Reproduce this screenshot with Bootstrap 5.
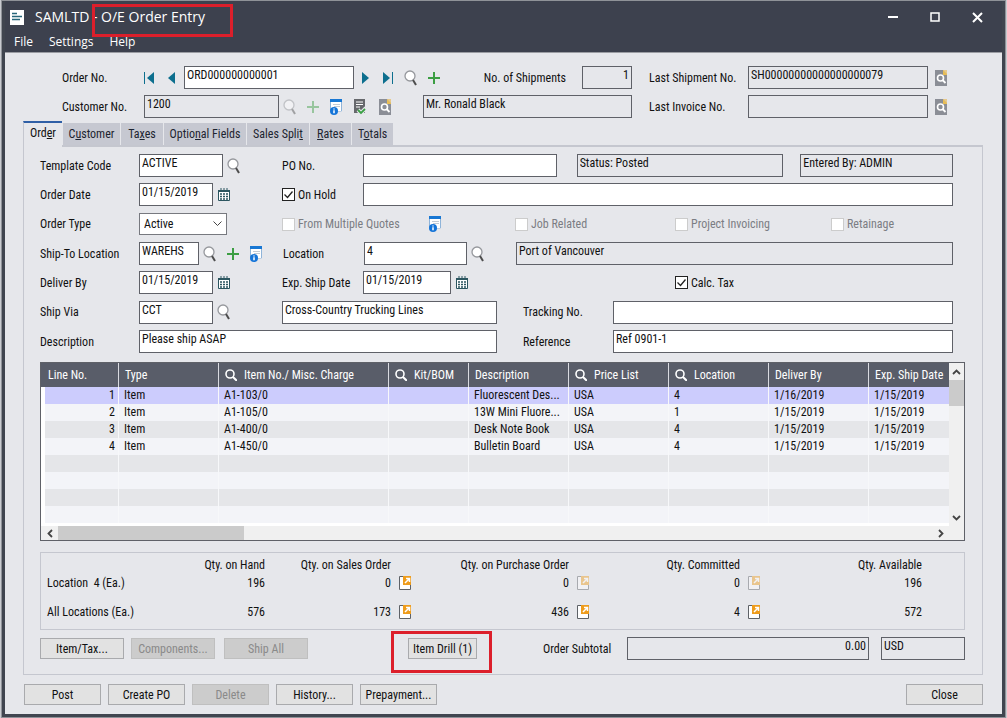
<!DOCTYPE html>
<html lang="en">
<head>
<meta charset="utf-8">
<meta name="viewport" content="width=device-width, initial-scale=1">
<title>SAMLTD - O/E Order Entry</title>
<link href="https://cdn.jsdelivr.net/npm/bootstrap@5.3.0/dist/css/bootstrap.min.css" rel="stylesheet">
<style>
:root{--face:#e6e7eb;--edge:#5f6168;--rule:#c5c7cf;--dark:#3d414e}
body{font-family:"Roboto Condensed","Roboto",sans-serif;font-size:12px;line-height:16px;color:#111;background:#c9cbd0}
button,input,select{font:inherit;color:inherit;border-radius:0}
.win{min-height:100vh;margin:0 1px;background:var(--face);border:solid #40454f;border-width:1px 4px 4px;outline:1px solid #8f9298;outline-offset:-1px}
.caption-bar{background:var(--dark);color:#fff;font-family:"Open Sans","Noto Sans",sans-serif;height:52px;border-bottom:1px solid #9b9da3}
.title-line{height:32px;padding-left:5px}
.title-text{font-size:14px;margin-left:11px}
.hot{position:relative}
.hot::after{content:"";position:absolute;border:3px solid #dc1f2b;pointer-events:none}
.hot-title::after{inset:-3px -28px -11px -9px}
.hot-drill::after{inset:-7px -15px -14px -17px}
.menu a{color:#fff;text-decoration:none;font-size:12px;line-height:18px}
.menu{padding-left:9px}
.sysbtn{width:42px;height:28px;background:none;border:0;padding:0;color:#fff}
.icon-btn{background:none;border:0;padding:0;width:22px;height:22px;display:flex;align-items:center;justify-content:center}
.icon-btn:disabled{opacity:.45}
svg{display:block}
.fld{border:1px solid var(--edge);background:#fff;height:23px;width:100%;min-width:0;padding:0 2px 5px}
.fld[readonly]{background:var(--face)}
.line{display:grid;align-items:center;min-height:23px}
.line>*{min-width:0;white-space:nowrap}
.top-form{padding:13px 48px 3px 57px}
.stack{display:grid;row-gap:6px}
.l-order{grid-template-columns:76px 22px 24px 170px 22px 23px 24px 22px 137px 50px 116px 1fr 26px}
.l-cust{grid-template-columns:82px 135px 23px 22px 24px 22px 53px 209px 116px 1fr 26px}
.line .icon-btn{justify-self:start}
.line .slot{justify-self:center}
.gap-l{padding-left:17px}
.tabs{margin-left:18px;position:relative;margin-bottom:-2px}
.tabs .nav-link{height:22px;padding:2px 0 0;text-align:center;background:#c6c8d1;color:#1d2430;border:0;border-left:1px solid #e6e7eb;border-radius:0;line-height:18px;white-space:nowrap}
.tabs .nav-link.active{height:26px;width:39px;background:var(--face);border-top:2px solid #2f5fa6;border-left:1px solid var(--rule);color:#111;padding-top:1px}
.t58{width:58px}.t43{width:43px}.t83{width:83px}.t63{width:63px}.t42{width:42px}
.tab-low{margin-bottom:2px}
.panel{margin:0 19px 0 18px;border:1px solid var(--rule);border-top-width:2px;padding:7px 17px 14px 16px}
.details{padding-right:12px}
.tall{min-height:24px}
.l-tmpl{grid-template-columns:99px 84px 59px 81px 194fr 20px 207fr 17px 153fr}
.l-date{grid-template-columns:99px 74px 69px 81px 1fr}
.l-type{grid-template-columns:99px 88px 55px 142px 91px 160px 156px 1fr}
.l-loc{grid-template-columns:99px 60px 22px 24px 38px 81px 103px 49px 1fr}
.l-deliv{grid-template-columns:99px 74px 69px 81px 88px 224px 1fr}
.l-via{grid-template-columns:99px 74px 69px 215px 116px 1fr}
.l-desc{grid-template-columns:99px 358px 116px 1fr}
.c7{grid-column:7}.c9{grid-column:9}
.pad26{padding-left:26px}
.drop{border:1px solid #77797f;background:#fff url("data:image/svg+xml,%3Csvg xmlns='http://www.w3.org/2000/svg' width='9' height='6'%3E%3Cpath d='M.5.5l4 4 4-4' fill='none' stroke='%23444'/%3E%3C/svg%3E") no-repeat right 4px center;height:22px;width:100%;appearance:none;padding:0 4px}
.tick{display:flex;align-items:center;gap:3px}
.tick input{appearance:none;width:13px;height:13px;border:1px solid #222;background:#fff;flex:none;margin:0}
.tick input:checked{background:#fff url("data:image/svg+xml,%3Csvg xmlns='http://www.w3.org/2000/svg' width='11' height='11'%3E%3Cpath d='M1.500 5.500l3 3 5-6' fill='none' stroke='%23222' stroke-width='1.300'/%3E%3C/svg%3E") center no-repeat}
.tick input:disabled{border-color:#ccc}
.tick input:disabled+label{color:#7b7d83}
.grid-box{margin-top:9px;border:1px solid var(--edge);background:#f0f0f0;display:grid;grid-template-columns:1fr 15px}
.grid-view{overflow:hidden;background:#fff;height:163px}
.lines{width:100%;table-layout:fixed;border-collapse:separate;border-spacing:0;white-space:nowrap}
.lines th{height:24px;background:#595d69;color:#fff;font-weight:400;padding:0 0 0 6px;border-left:1px solid #d9dae0;overflow:hidden}
.lines th:first-child{border-left:0;padding-left:7px}
.lines td{height:17px;line-height:16px;padding:0 8px 1px 5px;border-left:1px solid #f7f8fa;background:#f3f4f8;overflow:hidden;text-overflow:ellipsis}
.lines td:first-child{border-left:4px solid #fff;text-align:right;padding-right:3px}
.lines tbody tr:nth-child(odd) td{background:#e5e6e9}
.lines tbody tr.picked td{background:#ccccfd}
.lines th svg{display:inline-block;vertical-align:-2px;margin-right:7px}
.w77{width:77px}.w100{width:100px}.w170{width:170px}.w80{width:80px}
.vbar{display:flex;flex-direction:column;justify-content:space-between;position:relative}
.vbar::before,.hbar::before{content:"";background:#cbcbcb;order:1}
.vbar::before{height:26px;margin-bottom:auto}
.hbar{height:14px;display:flex;justify-content:space-between;align-items:center;grid-column:1}
.hbar::before{width:186px;height:14px;margin-right:auto}
.vbar>:last-child,.hbar>:last-child{order:2}
.arrow{border:0;background:none;padding:0;width:17px;height:14px;display:flex;align-items:center;justify-content:center}
.vbar .arrow{width:15px;height:17px}
.qty-box{margin-top:11px;border:1px solid var(--rule);padding:3px 0 3px 6px}
.qty{width:100%;table-layout:fixed;white-space:nowrap}
.qty th{font-weight:400}
.qty th,.qty td{padding:0;text-align:right;height:18px;vertical-align:middle}
.qty tbody tr+tr>*{height:34px;padding-top:6px}
.qty .icon-btn{width:28px;height:16px}
.q218{width:218px}.q126{width:126px}.q28{width:28px}.q150{width:150px}.q143{width:143px}.q42{width:42px}
.push{border:1px solid #a9aaad;background:#e2e2e2;height:21px;padding:0;white-space:nowrap;line-height:18px}
.push:disabled{background:#cccccc;border-color:#bfbfbf;color:#8a8a8a}
.b84{width:84px}.b77{width:77px}.b69{width:69px}
.actions{display:grid;grid-template-columns:91px 93px 184px 135px 84px 1fr 96px;align-items:center;margin-top:7px}
.footer-bar{padding:9px 19px 8px 19px}
.gap-7{gap:7px}
</style>
</head>
<body>
<svg width="0" height="0" class="position-absolute" aria-hidden="true">
  <symbol id="i-find" viewBox="0 0 14 16"><circle cx="6" cy="6" r="5" fill="#fff" stroke="#96989d" stroke-width="1.300"/><path d="M9 10l3 5" stroke="#4d4d4d" stroke-width="2"/></symbol>
  <symbol id="i-plus" viewBox="0 0 12 12"><path d="M6 0v12M0 6h12" stroke="#3c9e43" stroke-width="2"/></symbol>
  <symbol id="i-info" viewBox="0 0 14 16"><path d="M1.500 2v9M12.500 2v10H8" fill="none" stroke="#8fb4d9"/><path d="M2 3h10v9H2z" fill="#fff"/><path d="M1 0h12v3H1z" fill="#1877d3"/><path d="M4 5.500h7M5 7.500h6" stroke="#c4cbd4"/><circle cx="5" cy="12" r="4" fill="#1474d8"/><path d="M5 9.500v1M5 11.300v3" stroke="#fff" stroke-width="1.500"/></symbol>
  <symbol id="i-list" viewBox="0 0 13 16"><path d="M1 0h11v14H1z" fill="#66686c"/><path d="M3 3h7M3 5.500h7M3 8h4" stroke="#fff"/><path d="M5 11l3 3 5-5" fill="none" stroke="#e6e7eb" stroke-width="4"/><path d="M5 11l3 3 4-4" fill="none" stroke="#3ba045" stroke-width="1.800"/></symbol>
  <symbol id="i-doc" viewBox="0 0 12 16"><path d="M0 0h8l4 4v12H0z" fill="#8b8e96"/><path d="M8 0h4v4z" fill="#e9c98a"/><path d="M8 0l4 4v1H8z" fill="#e8bd55"/><circle cx="5.500" cy="8" r="3" fill="none" stroke="#fff" stroke-width="1.600"/><path d="M7.500 10l3 3" stroke="#fff" stroke-width="1.800"/></symbol>
  <symbol id="i-cal" viewBox="0 0 12 13"><path d="M.500 2.500h11v10H.500z" fill="#fff" stroke="#2c5660"/><path d="M0 2h12v2H0z" fill="#2c5660"/><path d="M3 0v3M6 0v3M9 0v3" stroke="#2c5660"/><path d="M2 6h2M5 6h2M8 6h2M2 8.500h2M5 8.500h2M8 8.500h2M2 11h2M5 11h2M8 11h2" stroke="#2c5660" stroke-width="1.300"/></symbol>
  <symbol id="i-drill" viewBox="0 0 12 14"><path d="M.500.500h11v13H.500z" fill="#fff" stroke="#5e6267"/><path d="M4 0h8v9H4z" fill="#ee9c1c"/><path d="M6 7l4-4M7 2.500h3.500V6" fill="none" stroke="#fff" stroke-width="1.500"/></symbol>
  <symbol id="i-lens" viewBox="0 0 12 12"><circle cx="5" cy="5" r="4" fill="none" stroke="currentColor" stroke-width="1.600"/><path d="M8 8l4 4" stroke="currentColor" stroke-width="2"/></symbol>
</svg>
<div class="win">
  <header class="caption-bar">
    <div class="title-line d-flex align-items-center">
      <svg width="14" height="15" viewBox="0 0 14 15"><path d="M0 0h14v15H0z" fill="#fff"/><path d="M2 3.500h5M2 6.500h10M2 9.500h8" stroke="#27667a" stroke-width="1.400"/></svg>
      <div class="title-text me-auto">SAMLTD - <span class="hot hot-title">O/E Order Entry</span></div>
      <button class="sysbtn" aria-label="Minimize"><svg class="mx-auto" width="10" height="10"><path d="M0 5h10" stroke="#fff" stroke-width="2"/></svg></button>
      <button class="sysbtn" aria-label="Maximize"><svg class="mx-auto" width="10" height="10"><path d="M1 1h8v8H1z" fill="none" stroke="#fff" stroke-width="1.500"/></svg></button>
      <button class="sysbtn me-1" aria-label="Close window"><svg class="mx-auto" width="11" height="11"><path d="M1 1l9 9M10 1l-9 9" stroke="#fff" stroke-width="2"/></svg></button>
    </div>
    <nav class="menu d-flex gap-3"><a href="#">File</a><a href="#">Settings</a><a href="#">Help</a></nav>
  </header>

  <main>
    <form class="top-form stack">
      <div class="line l-order">
        <label for="ord">Order No.</label>
        <button type="button" class="icon-btn" aria-label="First"><svg width="11" height="12"><path d="M.500 0v12" stroke="#0d6f8e"/><path d="M10 0v12L3 6z" fill="#0d6f8e"/></svg></button>
        <button type="button" class="icon-btn" aria-label="Previous"><svg width="7" height="12"><path d="M7 0v12L0 6z" fill="#0d6f8e"/></svg></button>
        <input id="ord" class="fld" value="ORD000000000001">
        <button type="button" class="icon-btn" aria-label="Next"><svg width="7" height="12"><path d="M0 0v12l7-6z" fill="#0d6f8e"/></svg></button>
        <button type="button" class="icon-btn" aria-label="Last"><svg width="11" height="12"><path d="M10.500 0v12" stroke="#0d6f8e"/><path d="M1 0v12l7-6z" fill="#0d6f8e"/></svg></button>
        <button type="button" class="icon-btn slot" aria-label="Find order"><svg width="14" height="16"><use href="#i-find"/></svg></button>
        <button type="button" class="icon-btn" aria-label="New order"><svg width="12" height="12"><use href="#i-plus"/></svg></button>
        <label for="nship" class="text-end pe-3">No. of Shipments</label>
        <input id="nship" class="fld text-end" readonly value="1">
        <label for="lship" class="gap-l">Last Shipment No.</label>
        <input id="lship" class="fld" readonly value="SH00000000000000000079">
        <button type="button" class="icon-btn slot" aria-label="Shipment details"><svg width="12" height="16"><use href="#i-doc"/></svg></button>
      </div>
      <div class="line l-cust">
        <label for="cust">Customer No.</label>
        <input id="cust" class="fld" readonly value="1200">
        <button type="button" class="icon-btn" disabled aria-label="Find customer"><svg width="14" height="16"><use href="#i-find"/></svg></button>
        <button type="button" class="icon-btn" disabled aria-label="New customer"><svg width="12" height="12"><use href="#i-plus"/></svg></button>
        <button type="button" class="icon-btn slot" aria-label="Customer information"><svg width="14" height="16"><use href="#i-info"/></svg></button>
        <button type="button" class="icon-btn" aria-label="Credit check"><svg width="13" height="16"><use href="#i-list"/></svg></button>
        <button type="button" class="icon-btn ms-1" aria-label="Customer details"><svg width="12" height="16"><use href="#i-doc"/></svg></button>
        <input class="fld" readonly aria-label="Customer name" value="Mr. Ronald Black">
        <label for="linv" class="gap-l">Last Invoice No.</label>
        <input id="linv" class="fld" readonly>
        <button type="button" class="icon-btn slot" aria-label="Invoice details"><svg width="12" height="16"><use href="#i-doc"/></svg></button>
      </div>
    </form>

    <nav class="nav tabs align-items-end flex-nowrap">
      <a class="nav-link active" href="#">Ord<u>e</u>r</a>
      <a class="nav-link t58 tab-low" href="#">C<u>u</u>stomer</a>
      <a class="nav-link t43 tab-low" href="#">Ta<u>x</u>es</a>
      <a class="nav-link t83 tab-low" href="#">Optio<u>n</u>al Fields</a>
      <a class="nav-link t63 tab-low" href="#">Sales Spli<u>t</u></a>
      <a class="nav-link t42 tab-low" href="#"><u>R</u>ates</a>
      <a class="nav-link t42 tab-low" href="#">T<u>o</u>tals</a>
    </nav>

    <section class="panel">
      <form class="details stack">
        <div class="line l-tmpl">
          <label for="tmpl">Template Code</label>
          <input id="tmpl" class="fld" value="ACTIVE">
          <button type="button" class="icon-btn" aria-label="Find template"><svg width="14" height="16"><use href="#i-find"/></svg></button>
          <label for="po">PO No.</label>
          <input id="po" class="fld">
          <input class="fld c7" readonly aria-label="Status" value="Status: Posted">
          <input class="fld c9" readonly aria-label="Entered by" value="Entered By: ADMIN">
        </div>
        <div class="line l-date">
          <label for="odate">Order Date</label>
          <input id="odate" class="fld" value="01/15/2019">
          <button type="button" class="icon-btn" aria-label="Pick order date"><svg width="12" height="13"><use href="#i-cal"/></svg></button>
          <div class="tick"><input type="checkbox" id="hold" checked><label for="hold">On Hold</label></div>
          <input class="fld" aria-label="Hold reason">
        </div>
        <div class="line l-type tall">
          <label for="otype">Order Type</label>
          <select id="otype" class="drop"><option>Active</option></select>
          <span></span>
          <div class="tick"><input type="checkbox" id="mq" disabled><label for="mq">From Multiple Quotes</label></div>
          <button type="button" class="icon-btn" aria-label="Quote information"><svg width="14" height="16"><use href="#i-info"/></svg></button>
          <div class="tick"><input type="checkbox" id="job" disabled><label for="job">Job Related</label></div>
          <div class="tick"><input type="checkbox" id="proj" disabled><label for="proj">Project Invoicing</label></div>
          <div class="tick"><input type="checkbox" id="ret" disabled><label for="ret">Retainage</label></div>
        </div>
        <div class="line l-loc">
          <label for="shipto">Ship-To Location</label>
          <input id="shipto" class="fld" value="WAREHS">
          <button type="button" class="icon-btn" aria-label="Find ship-to"><svg width="14" height="16"><use href="#i-find"/></svg></button>
          <button type="button" class="icon-btn slot" aria-label="New ship-to"><svg width="12" height="12"><use href="#i-plus"/></svg></button>
          <button type="button" class="icon-btn" aria-label="Ship-to information"><svg width="14" height="16"><use href="#i-info"/></svg></button>
          <label for="loc">Location</label>
          <input id="loc" class="fld" value="4">
          <button type="button" class="icon-btn" aria-label="Find location"><svg width="14" height="16"><use href="#i-find"/></svg></button>
          <input class="fld" readonly aria-label="Location name" value="Port of Vancouver">
        </div>
        <div class="line l-deliv">
          <label for="ddate">Deliver By</label>
          <input id="ddate" class="fld" value="01/15/2019">
          <button type="button" class="icon-btn" aria-label="Pick delivery date"><svg width="12" height="13"><use href="#i-cal"/></svg></button>
          <label for="edate">Exp. Ship Date</label>
          <input id="edate" class="fld" value="01/15/2019">
          <button type="button" class="icon-btn" aria-label="Pick ship date"><svg width="12" height="13"><use href="#i-cal"/></svg></button>
          <div class="tick"><input type="checkbox" id="calc" checked><label for="calc">Calc. Tax</label></div>
        </div>
        <div class="line l-via tall">
          <label for="via">Ship Via</label>
          <input id="via" class="fld" value="CCT">
          <button type="button" class="icon-btn" aria-label="Find carrier"><svg width="14" height="16"><use href="#i-find"/></svg></button>
          <input class="fld" aria-label="Carrier name" value="Cross-Country Trucking Lines">
          <label for="track" class="pad26">Tracking No.</label>
          <input id="track" class="fld">
        </div>
        <div class="line l-desc">
          <label for="desc">Description</label>
          <input id="desc" class="fld" value="Please ship ASAP">
          <label for="ref" class="pad26">Reference</label>
          <input id="ref" class="fld" value="Ref 0901-1">
        </div>
      </form>

      <div class="grid-box">
        <div class="grid-view">
          <table class="lines">
            <thead><tr>
              <th class="w77">Line No.</th><th class="w100">Type</th>
              <th class="w170"><svg width="12" height="12"><use href="#i-lens"/></svg>Item No./ Misc. Charge</th>
              <th class="w80"><svg width="12" height="12"><use href="#i-lens"/></svg>Kit/BOM</th>
              <th class="w100">Description</th>
              <th class="w100"><svg width="12" height="12"><use href="#i-lens"/></svg>Price List</th>
              <th class="w100"><svg width="12" height="12"><use href="#i-lens"/></svg>Location</th>
              <th class="w100">Deliver By</th><th>Exp. Ship Date</th>
            </tr></thead>
            <tbody>
              <tr class="picked"><td>1</td><td>Item</td><td>A1-103/0</td><td></td><td>Fluorescent Des...</td><td>USA</td><td>4</td><td>1/16/2019</td><td>1/15/2019</td></tr>
              <tr><td>2</td><td>Item</td><td>A1-105/0</td><td></td><td>13W Mini Fluore...</td><td>USA</td><td>1</td><td>1/15/2019</td><td>1/15/2019</td></tr>
              <tr><td>3</td><td>Item</td><td>A1-400/0</td><td></td><td>Desk Note Book</td><td>USA</td><td>4</td><td>1/15/2019</td><td>1/15/2019</td></tr>
              <tr><td>4</td><td>Item</td><td>A1-450/0</td><td></td><td>Bulletin Board</td><td>USA</td><td>4</td><td>1/15/2019</td><td>1/15/2019</td></tr>
              <tr><td></td><td></td><td></td><td></td><td></td><td></td><td></td><td></td><td></td></tr>
              <tr><td></td><td></td><td></td><td></td><td></td><td></td><td></td><td></td><td></td></tr>
              <tr><td></td><td></td><td></td><td></td><td></td><td></td><td></td><td></td><td></td></tr>
              <tr><td></td><td></td><td></td><td></td><td></td><td></td><td></td><td></td><td></td></tr>
            </tbody>
          </table>
        </div>
        <div class="vbar">
          <button class="arrow" aria-label="Scroll up"><svg width="9" height="6"><path d="M1 5l3.500-3.500L8 5" fill="none" stroke="#444" stroke-width="1.800"/></svg></button>
          <button class="arrow" aria-label="Scroll down"><svg width="9" height="6"><path d="M1 1l3.500 3.500L8 1" fill="none" stroke="#444" stroke-width="1.800"/></svg></button>
        </div>
        <div class="hbar">
          <button class="arrow" aria-label="Scroll left"><svg width="6" height="9"><path d="M5 1L1.500 4.500 5 8" fill="none" stroke="#444" stroke-width="1.800"/></svg></button>
          <button class="arrow" aria-label="Scroll right"><svg width="6" height="9"><path d="M1 1l3.500 3.500L1 8" fill="none" stroke="#444" stroke-width="1.800"/></svg></button>
        </div>
      </div>

      <div class="qty-box">
        <table class="qty">
          <thead><tr><th class="q218">Qty. on Hand</th><th class="q126">Qty. on Sales Order</th><th class="q28"></th><th class="q150">Qty. on Purchase Order</th><th class="q28"></th><th class="q143">Qty. Committed</th><th class="q28"></th><th>Qty. Available</th><th class="q42"></th></tr></thead>
          <tbody>
            <tr><td><span class="float-start">Location &nbsp;4 (Ea.)</span>196</td><td>0</td><td><button class="icon-btn" aria-label="Sales orders, location"><svg width="12" height="14"><use href="#i-drill"/></svg></button></td><td>0</td><td><button class="icon-btn" disabled aria-label="Purchase orders, location"><svg width="12" height="14"><use href="#i-drill"/></svg></button></td><td>0</td><td><button class="icon-btn" disabled aria-label="Committed, location"><svg width="12" height="14"><use href="#i-drill"/></svg></button></td><td>196</td><td></td></tr>
            <tr><td><span class="float-start">All Locations (Ea.)</span>576</td><td>173</td><td><button class="icon-btn" aria-label="Sales orders, all"><svg width="12" height="14"><use href="#i-drill"/></svg></button></td><td>436</td><td><button class="icon-btn" aria-label="Purchase orders, all"><svg width="12" height="14"><use href="#i-drill"/></svg></button></td><td>4</td><td><button class="icon-btn" aria-label="Committed, all"><svg width="12" height="14"><use href="#i-drill"/></svg></button></td><td>572</td><td></td></tr>
          </tbody>
        </table>
      </div>

      <div class="actions">
        <button class="push b84">Item/Tax...</button>
        <button class="push b84" disabled>Components...</button>
        <button class="push b84" disabled>Ship All</button>
        <div><span class="hot hot-drill d-inline-block"><button class="push b69 d-block">Item Drill (1)</button></span></div>
        <label for="sub">Order Subtotal</label>
        <input id="sub" class="fld text-end" readonly value="0.00">
        <div class="ps-2 ms-1"><input class="fld" readonly aria-label="Currency" value="USD"></div>
      </div>
    </section>

    <footer class="footer-bar d-flex">
      <div class="d-flex gap-7">
        <button class="push b77">Post</button>
        <button class="push b77">Create PO</button>
        <button class="push b77" disabled>Delete</button>
        <button class="push b77">History...</button>
        <button class="push b77">Prepayment...</button>
      </div>
      <button class="push b77 ms-auto">Close</button>
    </footer>
  </main>
</div>
<script src="https://cdn.jsdelivr.net/npm/bootstrap@5.3.0/dist/js/bootstrap.bundle.min.js"></script>
</body>
</html>
